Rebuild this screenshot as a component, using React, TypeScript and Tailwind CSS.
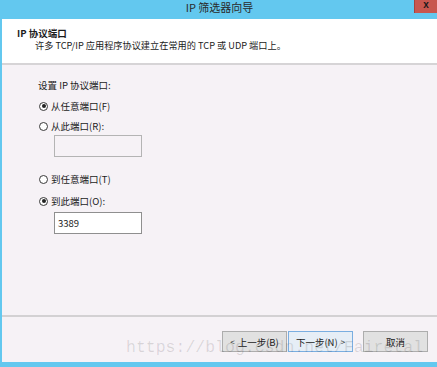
import React from "react";

const cjk = { fontFamily: '"Noto Sans CJK SC", "Noto Sans", sans-serif' };

function Radio({ checked }: { checked?: boolean }) {
  return (
    <span className="w-[9px] h-[9px] rounded-full border border-[#3a3a3a] bg-white flex items-center justify-center shrink-0">
      {checked && <span className="w-[4px] h-[4px] rounded-full bg-[#222]" />}
    </span>
  );
}

function RadioRow({ checked, label, className }: { checked?: boolean; label: string; className?: string }) {
  return (
    <div className={`flex items-center h-[14px] ${className ?? ""}`}>
      <Radio checked={checked} />
      <span className="ml-[3px] leading-[14px]">{label}</span>
    </div>
  );
}

export default function App() {
  return (
    <div
      className="relative w-[437px] h-[367px] bg-[#63c8ef] flex flex-col pl-[2px] pb-[5px] overflow-hidden text-[9.5px] text-[#1b1b1b]"
      style={cjk}
    >
      {/* title bar */}
      <div className="relative h-[19px] shrink-0 flex justify-center">
        <span className="text-[11px] leading-[15px] text-[#2a2a2a]">IP 筛选器向导</span>
        <div className="absolute right-0 top-0 w-[23px] h-[13px] bg-[#c8574f] border-l border-[#a8423c] flex items-start justify-center">
          <span className="text-[10px] font-bold leading-[10px] text-[#1a1a1a]" style={{ fontFamily: '"Liberation Sans", sans-serif' }}>x</span>
        </div>
      </div>

      {/* header */}
      <div className="h-[44px] shrink-0 bg-white pt-[8px]">
        <div className="pl-[15px] leading-[12px] font-bold">IP 协议端口</div>
        <div className="pl-[33px] leading-[12px] text-[9.2px]">许多 TCP/IP 应用程序协议建立在常用的 TCP 或 UDP 端口上。</div>
      </div>
      <div className="h-[2px] shrink-0 bg-[#d6d4d6]" />

      {/* body */}
      <div className="h-[250px] shrink-0 bg-[#f6f2f6] pt-[13px] pl-[37px] flex flex-col">
        <div className="h-[14px] leading-[14px] -ml-[1px]">设置 IP 协议端口:</div>
        <RadioRow checked label="从任意端口(F)" className="mt-[7px]" />
        <RadioRow label="从此端口(R):" className="mt-[6px]" />
        <div className="mt-[2px] ml-[15px] w-[88px] h-[22px] border border-[#b4b4b4] bg-[#f6f2f6]" />
        <RadioRow label="到任意端口(T)" className="mt-[15px]" />
        <RadioRow checked label="到此端口(O):" className="mt-[8px]" />
        <div className="mt-[4px] ml-[15px] w-[88px] h-[22px] border border-[#8f8f8f] bg-white flex items-center pl-[3px] leading-[12px]">
          3389
        </div>
      </div>
      <div className="h-[2px] shrink-0 bg-[#d3d1d3]" />

      {/* footer */}
      <div className="flex-1 bg-[#f6f2f6] flex justify-end items-start pt-[14px] pr-[9px]">
        <button className="w-[65px] h-[21px] border border-[#adadad] bg-[#e1e1e1] flex items-center justify-center leading-[12px]">
          <span className="text-[8px] mr-[3px]">&lt;</span>上一步(B)
        </button>
        <button className="ml-[1px] w-[65px] h-[21px] border border-[#7aaee0] bg-[#e6eef6] flex items-center justify-center leading-[12px]">
          下一步(N)<span className="text-[8px] ml-[3px]">&gt;</span>
        </button>
        <button className="ml-[10px] w-[65px] h-[21px] border border-[#adadad] bg-[#e1e1e1] flex items-center justify-center leading-[12px]">
          取消
        </button>
      </div>

      {/* watermark */}
      <div
        className="absolute left-[126px] top-[339px] text-[16.5px] leading-[18px] text-[rgba(0,0,0,0.12)] whitespace-nowrap pointer-events-none"
        style={{ fontFamily: '"Liberation Mono", monospace' }}
      >
        https://blog.csdn.net/Fairetal
      </div>
    </div>
  );
}
